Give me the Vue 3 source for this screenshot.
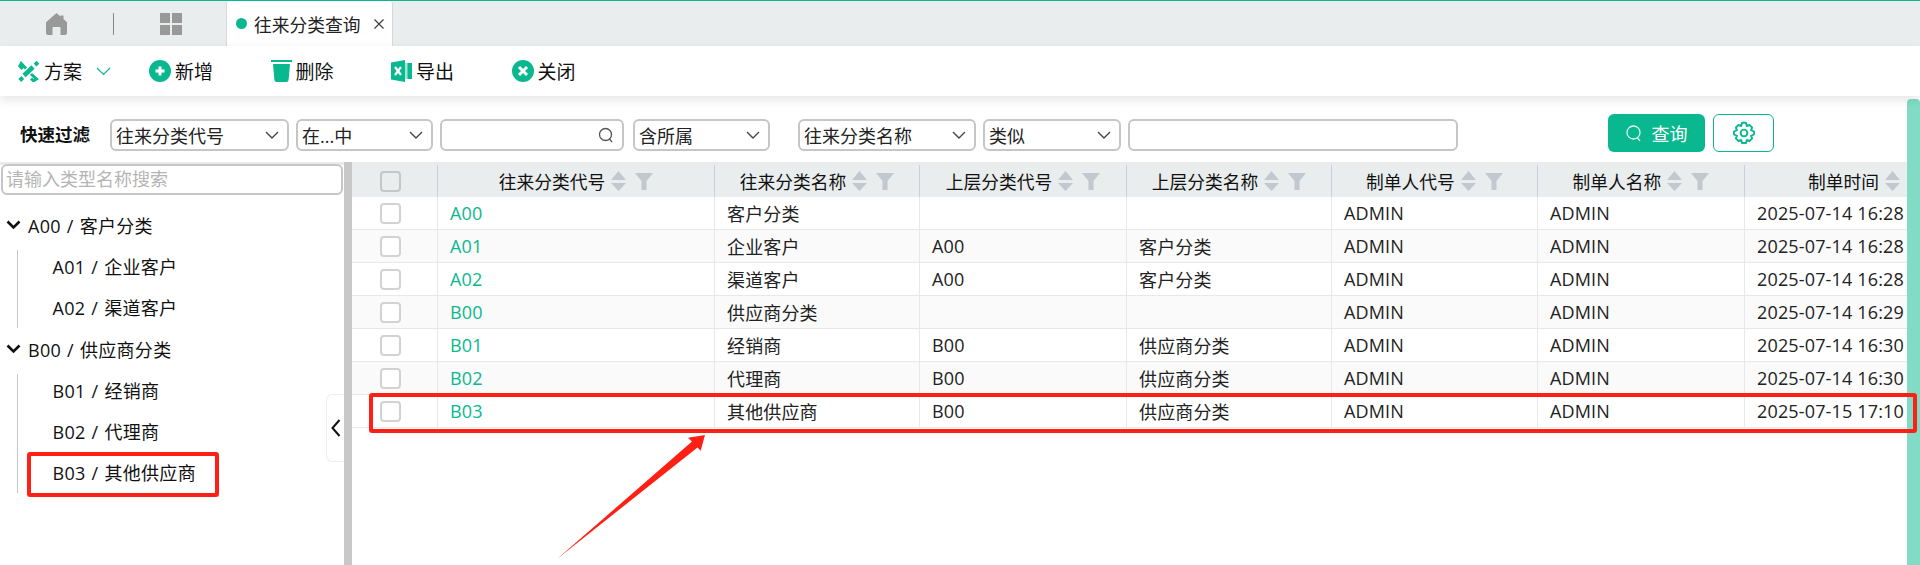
<script setup>
const tree = [
  { label: 'A00 / 客户分类', kids: ['A01 / 企业客户', 'A02 / 渠道客户'] },
  { label: 'B00 / 供应商分类', kids: ['B01 / 经销商', 'B02 / 代理商', 'B03 / 其他供应商'] },
]
const columns = [
  { title: '往来分类代号' },
  { title: '往来分类名称' },
  { title: '上层分类代号' },
  { title: '上层分类名称' },
  { title: '制单人代号' },
  { title: '制单人名称' },
  { title: '制单时间' },
]
const rows = [
  ['A00', '客户分类', '', '', 'ADMIN', 'ADMIN', '2025-07-14 16:28'],
  ['A01', '企业客户', 'A00', '客户分类', 'ADMIN', 'ADMIN', '2025-07-14 16:28'],
  ['A02', '渠道客户', 'A00', '客户分类', 'ADMIN', 'ADMIN', '2025-07-14 16:28'],
  ['B00', '供应商分类', '', '', 'ADMIN', 'ADMIN', '2025-07-14 16:29'],
  ['B01', '经销商', 'B00', '供应商分类', 'ADMIN', 'ADMIN', '2025-07-14 16:30'],
  ['B02', '代理商', 'B00', '供应商分类', 'ADMIN', 'ADMIN', '2025-07-14 16:30'],
  ['B03', '其他供应商', 'B00', '供应商分类', 'ADMIN', 'ADMIN', '2025-07-15 17:10'],
]
</script>

<template>
  <div class="page">
    <header class="tabs">
      <div class="tab-icon home">
        <svg width="21" height="22" viewBox="0 0 21 22"><path fill="#999" d="M10.5 0 L14.5 3.5 V2.5 H17.5 V6 L21 9.2 V20 Q21 22 19 22 H14.5 V15 Q14.5 14 13.5 14 H7.5 Q6.5 14 6.5 15 V22 H2 Q0 22 0 20 V9.2 Z"/></svg>
      </div>
      <span class="tab-divider"></span>
      <div class="tab-icon grid-icon">
        <svg width="22" height="22" viewBox="0 0 22 22" fill="#999"><rect width="10" height="10"/><rect x="12" width="10" height="10"/><rect y="12" width="10" height="10"/><rect x="12" y="12" width="10" height="10"/></svg>
      </div>
      <div class="tab">
        <span class="dot"></span>
        <span class="tab-title">往来分类查询</span>
        <svg class="tab-close" width="12" height="12" viewBox="0 0 12 12"><path d="M1.5 1.5 L10.5 10.5 M10.5 1.5 L1.5 10.5" stroke="#444" stroke-width="1.3"/></svg>
      </div>
    </header>

    <div class="toolbar">
      <div class="tool plan">
        <svg width="22" height="21" viewBox="0 0 22 21" fill="none" stroke="#0ab88f">
          <path stroke-width="4.6" d="M6 14.5 L15 6"/>
          <path stroke-width="4" d="M17 4 L20 1.2"/>
          <path stroke-width="3" d="M8 7.5 L3.2 2.5 L1.8 5 L4.5 8"/>
          <path stroke-width="3" d="M13 13 L18.5 18 L15.5 19.8 L13 17.5"/>
          <path stroke-width="4" d="M1.8 19.5 L4.8 16.5"/>
        </svg>
        <span>方案</span>
        <svg class="plan-caret" width="15" height="9" viewBox="0 0 15 9" fill="none"><path d="M1 1 L7.5 7.5 L14 1" stroke="#0ab88f" stroke-width="1.2"/></svg>
      </div>
      <div class="tool">
        <svg width="22" height="22" viewBox="0 0 22 22"><circle cx="11" cy="11" r="11" fill="#0ab88f"/><path d="M11 6.5 V15.5 M6.5 11 H15.5" stroke="#fff" stroke-width="3"/></svg>
        <span>新增</span>
      </div>
      <div class="tool">
        <svg width="21" height="22" viewBox="0 0 21 22"><path fill="#0ab88f" d="M0 0 H21 V2 H0 Z M2 4 H19 L17.6 20 Q17.4 22 15.5 22 H5.5 Q3.6 22 3.4 20 Z"/></svg>
        <span>删除</span>
      </div>
      <div class="tool">
        <svg width="21" height="22" viewBox="0 0 21 22">
          <path fill="#0ab88f" d="M0 2.5 L14 0 V22 L0 19.5 Z"/>
          <path fill="#a5e6d4" d="M14 3 H21 V19 H14 Z"/>
          <path fill="#0ab88f" d="M16.5 3 H21 V19 H16.5 Z"/>
          <path d="M4 7 L10 15 M10 7 L4 15" stroke="#fff" stroke-width="2.2"/>
        </svg>
        <span>导出</span>
      </div>
      <div class="tool">
        <svg width="22" height="22" viewBox="0 0 22 22"><circle cx="11" cy="11" r="11" fill="#0ab88f"/><path d="M7 7 L15 15 M15 7 L7 15" stroke="#fff" stroke-width="3"/></svg>
        <span>关闭</span>
      </div>
    </div>

    <div class="filters">
      <strong class="filter-label">快速过滤</strong>
      <div class="ctl w179"><span>往来分类代号</span><svg class="caret" width="14" height="8" viewBox="0 0 14 8" fill="none"><path d="M1 1 L7 7 L13 1" stroke="#444" stroke-width="1.4"/></svg></div>
      <div class="ctl w137 g7"><span>在...中</span><svg class="caret" width="14" height="8" viewBox="0 0 14 8" fill="none"><path d="M1 1 L7 7 L13 1" stroke="#444" stroke-width="1.4"/></svg></div>
      <div class="ctl w184 g7"><svg class="lens" width="16" height="16" viewBox="0 0 16 16" fill="none" stroke="#555" stroke-width="1.3"><circle cx="7.5" cy="7.5" r="6"/><path d="M11.5 12 L14 15"/></svg></div>
      <div class="ctl w137 g9"><span>含所属</span><svg class="caret" width="14" height="8" viewBox="0 0 14 8" fill="none"><path d="M1 1 L7 7 L13 1" stroke="#444" stroke-width="1.4"/></svg></div>
      <div class="ctl w178 g28"><span>往来分类名称</span><svg class="caret" width="14" height="8" viewBox="0 0 14 8" fill="none"><path d="M1 1 L7 7 L13 1" stroke="#444" stroke-width="1.4"/></svg></div>
      <div class="ctl w138 g7"><span>类似</span><svg class="caret" width="14" height="8" viewBox="0 0 14 8" fill="none"><path d="M1 1 L7 7 L13 1" stroke="#444" stroke-width="1.4"/></svg></div>
      <div class="ctl w329 g7"></div>
      <button class="query">
        <svg width="16" height="17" viewBox="0 0 16 17" fill="none" stroke="#dff6ef" stroke-width="1.3"><circle cx="7.5" cy="7.5" r="6.5"/><path d="M11.5 13 L14 16"/></svg>
        <span>查询</span>
      </button>
      <button class="gear">
        <svg width="24" height="24" viewBox="0 0 24 24" fill="none" stroke="#0ab88f" stroke-width="1.9" stroke-linejoin="round"><circle cx="12" cy="12" r="3.4"/><path d="M12 1.5 L14 2 L14.8 5 L17.5 4 L20.2 6.6 L19 9.2 L22 10.5 V13.5 L19 14.8 L20.2 17.4 L17.5 20 L14.8 19 L14 22 H10 L9.2 19 L6.5 20 L3.8 17.4 L5 14.8 L2 13.5 V10.5 L5 9.2 L3.8 6.6 L6.5 4 L9.2 5 L10 2 Z"/></svg>
      </button>
    </div>

    <main class="main">
      <aside class="side">
        <div class="side-search">请输入类型名称搜索</div>
        <div class="tree">
          <div v-for="node in tree" :key="node.label">
            <div class="node parent">
              <svg class="node-arrow" width="15" height="10" viewBox="0 0 15 10" fill="none"><path d="M1.5 1.5 L7.5 7.5 L13.5 1.5" stroke="#111" stroke-width="2.6"/></svg>
              <span>{{ node.label }}</span>
            </div>
            <div class="kids">
              <div v-for="kid in node.kids" :key="kid" class="node child">{{ kid }}</div>
            </div>
          </div>
        </div>
        <div class="collapse">
          <svg width="10" height="18" viewBox="0 0 10 18" fill="none"><path d="M8.5 1 L1.5 9 L8.5 17" stroke="#111" stroke-width="2"/></svg>
        </div>
      </aside>

      <section class="table">
        <div class="row head">
          <div class="cell check"><span class="box head-box"></span></div>
          <div v-for="c in columns" :key="c.title" class="cell th">
            <span>{{ c.title }}</span>
            <svg class="sort" width="15" height="20" viewBox="0 0 15 20" fill="#c3c7d0"><path d="M7.5 0 L15 9 H0 Z M0 12 H15 L7.5 20 Z"/></svg>
            <svg class="funnel" width="18" height="17" viewBox="0 0 18 17" fill="#c3c7d0"><path d="M0 0 H18 L11.5 8 V17 H6.5 V8 Z"/></svg>
          </div>
        </div>
        <div v-for="(r, i) in rows" :key="r[0]" class="row" :class="{ alt: i % 2 === 1 }">
          <div class="cell check"><span class="box"></span></div>
          <div v-for="(v, j) in r" :key="j" class="cell" :class="{ link: j === 0 }">{{ v }}</div>
        </div>
      </section>
    </main>

    <div class="scrollbar"></div>

    <div class="mark mark-tree"></div>
    <div class="mark mark-row"></div>
    <svg class="arrow" width="160" height="130" viewBox="550 432 160 130">
      <path fill="#ff2015" d="M557 559 L692 441.5 L688 437.7 L705 435 L700.7 450.7 L697.5 447.5 Z"/>
    </svg>
  </div>
</template>

<style>
html, body { margin: 0; padding: 0; background: #fff; }
</style>

<style scoped>
.page {
  position: relative;
  width: 1920px;
  height: 565px;
  overflow: hidden;
  background: #fff;
  color: #111;
  font-family: "Open Sans", "Noto Sans CJK SC", sans-serif;
  font-size: 18px;
}
.tabs {
  display: flex;
  align-items: center;
  box-sizing: border-box;
  height: 46px;
  border-top: 1.5px solid #0ab88f;
  background: #e9eded;
}
.tab-icon { display: flex; }
.home { margin-left: 46px; }
.tab-divider { width: 1px; height: 22px; margin-left: 46px; background: #888; }
.grid-icon { margin-left: 46px; }
.tab {
  display: flex;
  align-items: center;
  box-sizing: border-box;
  align-self: stretch;
  width: 167px;
  margin-left: 44px;
  padding-left: 9px;
  background: #fff;
  border: 1px solid #d5d9d9;
  border-width: 0 1px;
  border-radius: 3px 3px 0 0;
}
.dot { width: 11px; height: 11px; border-radius: 50%; background: #0ab88f; }
.tab-title { margin-left: 7px; color: #222; font-size: 17.75px; white-space: nowrap; }
.tab-close { margin-left: 12px; }

.toolbar {
  position: relative;
  z-index: 1;
  display: flex;
  align-items: center;
  height: 50px;
  padding-left: 18px;
  background: #fff;
  box-shadow: 0 4px 10px rgba(0, 0, 0, 0.1);
  font-size: 19px;
}
.tool { display: flex; align-items: center; gap: 4px; margin-right: 57.5px; white-space: nowrap; }
.plan { margin-right: 38px; }
.plan-caret { margin-left: 10px; }

.filters {
  display: flex;
  align-items: flex-start;
  box-sizing: border-box;
  height: 66px;
  padding: 18px 0 0 20px;
}
.filter-label { width: 90px; margin-top: 7px; font-weight: 700; font-size: 17.5px; white-space: nowrap; }
.ctl {
  display: flex;
  align-items: center;
  justify-content: space-between;
  box-sizing: border-box;
  height: 32px;
  margin-top: 5px;
  padding: 0 8px 0 4px;
  border: 2px solid #c6c6c6;
  border-radius: 6px;
  white-space: nowrap;
  color: #222;
}
.lens { margin-left: auto; }
.w179 { width: 179px; }
.w137 { width: 137px; }
.w184 { width: 184px; }
.w178 { width: 178px; }
.w138 { width: 138px; }
.w329 { width: 330px; }
.g7 { margin-left: 7px; }
.g9 { margin-left: 9px; }
.g28 { margin-left: 28px; }
.query, .gear {
  display: flex;
  align-items: center;
  justify-content: center;
  box-sizing: border-box;
  height: 38px;
  padding: 0;
  border-radius: 6px;
  font: inherit;
}
.query {
  width: 97px;
  margin-left: 150px;
  gap: 10px;
  border: 0;
  background: #0ab88f;
  color: #fff;
}
.gear { width: 61px; margin-left: 8px; border: 1px solid #0ab88f; background: #fff; }

.main {
  display: flex;
  height: 403px;
  border-top: 3px solid #ebebeb;
  margin-right: 13px;
}
.side {
  position: relative;
  box-sizing: content-box;
  width: 344px;
  border-right: 8px solid #c8c8c8;
  margin-top: -3px;
}
.side-search {
  box-sizing: border-box;
  width: 342px;
  height: 31px;
  margin: 2px 0 0 1px;
  padding-left: 3px;
  border: 2px solid #c6c6c6;
  border-radius: 6px;
  background: #fff;
  color: #b5b5b5;
  line-height: 27px;
  white-space: nowrap;
}
.tree { padding-top: 9px; letter-spacing: 0.3px; word-spacing: 1px; }
.node { display: flex; align-items: center; height: 41.3px; white-space: nowrap; }
.parent { padding-left: 6px; }
.node-arrow { margin-right: 7px; }
.child { padding-left: 35.5px; }
.kids { position: relative; margin-left: 17px; }
.kids::before {
  content: "";
  position: absolute;
  left: 0;
  top: 5px;
  bottom: 0;
  width: 1px;
  background: #c6c6c6;
}
.collapse {
  position: absolute;
  top: 232px;
  right: 0;
  display: flex;
  align-items: center;
  justify-content: center;
  box-sizing: border-box;
  width: 18px;
  height: 68px;
  border: 1px solid #ececf2;
  border-right: 0;
  border-radius: 6px 0 0 6px;
  background: #fff;
}

.table { flex: 1; min-width: 0; overflow: hidden; color: #222; }
.row {
  display: grid;
  grid-template-columns: 86px 277px 205px 207px 205px 206px 207px 246px;
  width: 1639px;
  height: 33px;
  border-bottom: 1px solid #e8e8e8;
  box-sizing: border-box;
}
.row.alt { background: #fafafa; }
.head { height: 32px; border-bottom: 0; background: #e9eded; color: #111; }
.cell {
  display: flex;
  align-items: center;
  min-width: 0;
  padding-left: 12px;
  border-right: 1px solid #e8e8e8;
  letter-spacing: 0.15px;
  white-space: nowrap;
  overflow: hidden;
}
.head .cell { border-right-color: #c9cfdd; }
.th { justify-content: center; padding-left: 0; letter-spacing: 0; font-size: 17.75px; }
.check { justify-content: center; padding: 0 9px 0 0; }
.box {
  box-sizing: border-box;
  width: 21px;
  height: 21px;
  border: 2px solid #d2d2d2;
  border-radius: 4px;
  background: #fff;
}
.head-box { background: #e9eded; border-color: #c6c6c6; }
.link { color: #0ab88f; }
.sort { margin-left: 6px; flex: none; }
.funnel { margin-left: 9px; flex: none; }

.scrollbar {
  position: absolute;
  top: 99px;
  right: 0;
  bottom: 0;
  width: 13px;
  border-radius: 4px 4px 0 0;
  background: #82dbc4;
}
.mark {
  position: absolute;
  box-sizing: border-box;
  border: 4px solid #ff2015;
  border-radius: 3px;
}
.mark-tree { left: 27px; top: 452px; width: 192px; height: 45px; }
.mark-row { left: 369px; top: 393px; width: 1548px; height: 40px; }
.arrow { position: absolute; left: 550px; top: 432px; }
</style>
